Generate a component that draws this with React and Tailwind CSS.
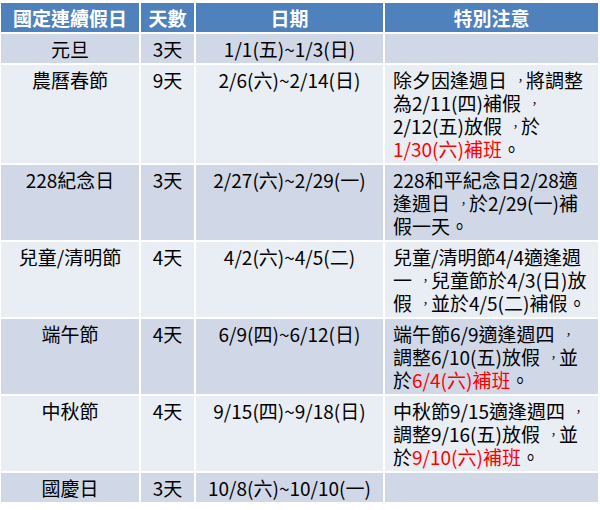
const rows = [
  { name: '元旦', days: '3天', date: '1/1(五)~1/3(日)', note: null, dark: true },
  {
    name: '農曆春節',
    days: '9天',
    date: '2/6(六)~2/14(日)',
    note: [
      ['除夕因逢週日，將調整'],
      ['為2/11(四)補假，'],
      ['2/12(五)放假，於'],
      [{ red: '1/30(六)補班' }, '。'],
    ],
  },
  {
    name: '228紀念日',
    days: '3天',
    date: '2/27(六)~2/29(一)',
    note: [['228和平紀念日2/28適'], ['逢週日，於2/29(一)補'], ['假一天。']],
    dark: true,
  },
  {
    name: '兒童/清明節',
    days: '4天',
    date: '4/2(六)~4/5(二)',
    note: [['兒童/清明節4/4適逢週'], ['一，兒童節於4/3(日)放'], ['假，並於4/5(二)補假。']],
  },
  {
    name: '端午節',
    days: '4天',
    date: '6/9(四)~6/12(日)',
    note: [['端午節6/9適逢週四，'], ['調整6/10(五)放假，並'], ['於', { red: '6/4(六)補班' }, '。']],
    dark: true,
  },
  {
    name: '中秋節',
    days: '4天',
    date: '9/15(四)~9/18(日)',
    note: [['中秋節9/15適逢週四，'], ['調整9/16(五)放假，並'], ['於', { red: '9/10(六)補班' }, '。']],
  },
  { name: '國慶日', days: '3天', date: '10/8(六)~10/10(一)', note: null, dark: true },
];

// the fallback CJK font puts "，" in the lower-left corner; pull it to the middle like the source
const Text = ({ s }) => {
  const parts = s.split('，');
  return parts.map((p, i) => (
    <span key={i}>
      {p}
      {i < parts.length - 1 && (
        <span className="inline-block translate-x-[4px] scale-[0.6]">，</span>
      )}
    </span>
  ));
};

const Note = ({ lines }) => {
  if (!lines) return null;
  return lines.map((line, i) => (
    <div key={i}>
      {line.map((part, j) =>
        typeof part === 'string' ? (
          <Text key={j} s={part} />
        ) : (
          <span key={j} className="text-[#ff0000]">{part.red}</span>
        )
      )}
    </div>
  ));
};

const App = () => {
  return (
    <div
      lang="zh-TW"
      className="w-[600px] h-[510px] bg-white pt-[3px] pl-[1px] text-[19px] leading-[23px] text-black"
      style={{ fontFamily: '"Noto Sans CJK TC", "Noto Sans", sans-serif' }}
    >
      <div className="grid grid-cols-[138px_53px_187px_213px] gap-[2px]">
        <div className="bg-[#4f81bd] text-white font-bold text-center py-[3px]">國定連續假日</div>
        <div className="bg-[#4f81bd] text-white font-bold text-center py-[3px]">天數</div>
        <div className="bg-[#4f81bd] text-white font-bold text-center py-[3px]">日期</div>
        <div className="bg-[#4f81bd] text-white font-bold text-center py-[3px]">特別注意</div>

        {rows.map((r) => {
          const bg = r.dark ? 'bg-[#d0d8e8]' : 'bg-[#e9edf4]';
          return [
            <div key={r.name + 'a'} className={`${bg} text-center py-[3px]`}>{r.name}</div>,
            <div key={r.name + 'b'} className={`${bg} text-center py-[3px]`}>{r.days}</div>,
            <div key={r.name + 'c'} className={`${bg} text-center py-[3px]`}>{r.date}</div>,
            <div key={r.name + 'd'} className={`${bg} py-[3px] pl-[8px] whitespace-nowrap`}>
              <Note lines={r.note} />
            </div>,
          ];
        })}
      </div>
    </div>
  );
};

export default App;
